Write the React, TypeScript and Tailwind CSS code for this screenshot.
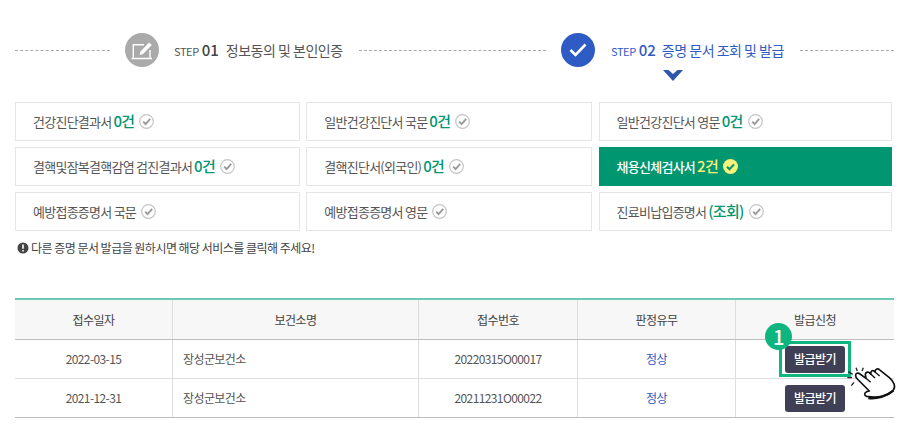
const fontStack = { fontFamily: '"Noto Sans CJK KR", "Noto Sans", sans-serif' }

function CheckIcon({ active }: { active?: boolean }) {
  if (active) {
    return (
      <svg width="15" height="15" viewBox="0 0 15 15" className="shrink-0">
        <circle cx="7.5" cy="7.5" r="7.5" fill="#f7f27a" />
        <path d="M4 7.8l2.5 2.5L11 5.4" fill="none" stroke="#00966f" strokeWidth="2" />
      </svg>
    )
  }
  return (
    <svg width="15" height="15" viewBox="0 0 15 15" className="shrink-0">
      <circle cx="7.5" cy="7.5" r="6.8" fill="#fff" stroke="#c4c4c4" strokeWidth="1.2" />
      <path d="M4.2 7.6l2.4 2.6L11.2 4.8" fill="none" stroke="#999999" strokeWidth="1.8" />
    </svg>
  )
}

function Dashed({ className }: { className: string }) {
  return <div className={`border-t border-dashed border-[#a8a8a8] ${className}`} />
}

function StepsBar() {
  return (
    <div className="flex items-center pl-[15px] pt-[33px] h-[67px]">
      <Dashed className="w-[95px]" />
      <div className="w-[34px] h-[34px] rounded-full bg-[#aaaaaa] ml-[15px] flex items-center justify-center">
        <svg width="24" height="22" viewBox="0 0 24 22">
          <path d="M3.3 18.5V5.7H14M20 11v7.5M1.5 19.5h20.5" fill="none" stroke="#fff" strokeWidth="1.4" />
          <path d="M9.5 16l1-3.6 8.6-9 2.7 2.6-8.7 9z" fill="#fff" />
        </svg>
      </div>
      <div className="ml-[15px] w-[185px] flex items-baseline text-[#555555] whitespace-nowrap">
        <span className="text-[11px] tracking-[-0.4px]">STEP</span>
        <span className="text-[15px] font-medium ml-[3px] text-[#444]">01</span>
        <span className="text-[14px] ml-[7px] tracking-[-0.5px]">정보동의 및 본인인증</span>
      </div>
      <Dashed className="w-[187px]" />
      <div className="relative w-[34px] h-[34px] rounded-full bg-[#2f5bc4] ml-[15px] flex items-center justify-center">
        <svg width="20" height="16" viewBox="0 0 20 16">
          <path d="M2.5 8l5 5L17.5 2.5" fill="none" stroke="#fff" strokeWidth="2.6" />
        </svg>
      </div>
      <div className="relative ml-[16px] w-[189px] flex items-baseline text-[#2f5bc4] whitespace-nowrap">
        <span className="text-[11px] tracking-[-0.4px]">STEP</span>
        <span className="text-[15px] font-medium ml-[3px]">02</span>
        <span className="text-[14px] ml-[6px] tracking-[-0.5px]">증명 문서 조회 및 발급</span>
        <svg width="20" height="11" viewBox="0 0 20 11" className="absolute left-[52px] top-[31px]">
          <path d="M0 0h5.5L10 4l4.5-4H20L10 11z" fill="#2f55ac" />
        </svg>
      </div>
      <Dashed className="w-[94px]" />
    </div>
  )
}

interface Service {
  name: string
  count: string
  active?: boolean
}

const services: Service[] = [
  { name: '건강진단결과서', count: '0건' },
  { name: '일반건강진단서 국문', count: '0건' },
  { name: '일반건강진단서 영문', count: '0건' },
  { name: '결핵및잠복결핵감염 검진결과서', count: '0건' },
  { name: '결핵진단서(외국인)', count: '0건' },
  { name: '채용신체검사서', count: '2건', active: true },
  { name: '예방접종증명서 국문', count: '' },
  { name: '예방접종증명서 영문', count: '' },
  { name: '진료비납입증명서', count: '(조회)' },
]

function ServiceGrid() {
  return (
    <div className="grid grid-cols-[285px_286px_293px] gap-x-[6.3px] gap-y-[6px] ml-[15px] mt-[35px]">
      {services.map((s) => (
        <div
          key={s.name}
          className={`h-[39px] flex items-center gap-[5px] pl-[17px] whitespace-nowrap border text-[13px] tracking-[-0.75px] ${
            s.active
              ? 'bg-[#00966f] border-[#00966f] text-white font-medium'
              : 'bg-white border-[#e6e6e6] text-[#555555]'
          }`}
        >
          <span>
            {s.name}
            {s.count && (
              <span
                className={`ml-[2px] text-[15px] font-medium ${s.active ? 'text-[#f7f27a]' : 'text-[#00966f]'}`}
              >
                {s.count}
              </span>
            )}
          </span>
          <CheckIcon active={s.active} />
        </div>
      ))}
    </div>
  )
}

const rows = [
  { date: '2022-03-15', center: '장성군보건소', no: '20220315O00017', result: '정상' },
  { date: '2021-12-31', center: '장성군보건소', no: '20211231O00022', result: '정상' },
]

function ResultTable() {
  const colClass = 'grid grid-cols-[158px_246px_159px_158px_158px]'
  return (
    <div className="relative ml-[15px] mt-[42px] w-[879px] border-t-2 border-[#6fc9b2] text-[12px] tracking-[-0.6px] text-[#555555]">
      <div className={`${colClass} h-[40px] bg-[#f7f7f7] border-b border-[#bdbdbd] text-[#444]`}>
        {['접수일자', '보건소명', '접수번호', '판정유무', '발급신청'].map((h, i) => (
          <div key={h} className={`flex items-center justify-center ${i < 4 ? 'border-r border-[#dddddd]' : ''}`}>
            {h}
          </div>
        ))}
      </div>
      {rows.map((r, i) => (
        <div
          key={r.no}
          className={`${colClass} h-[39px] border-b ${i === rows.length - 1 ? 'border-[#bdbdbd]' : 'border-[#dddddd]'}`}
        >
          <div className="flex items-center justify-center border-r border-[#dddddd]">{r.date}</div>
          <div className="flex items-center pl-[10px] border-r border-[#dddddd]">{r.center}</div>
          <div className="flex items-center justify-center border-r border-[#dddddd]">{r.no}</div>
          <div className="flex items-center justify-center border-r border-[#dddddd] text-[#2f5bc4]">{r.result}</div>
          <div className="flex items-center justify-center">
            <button className="w-[60px] h-[27px] rounded-[3px] bg-[#3f3f55] text-white text-[12px] font-medium">
              발급받기
            </button>
          </div>
        </div>
      ))}

      {/* highlight overlay */}
      <div className="absolute left-[764px] top-[41px] w-[72px] h-[36px] border-[3px] border-[#0fb57f]" />
      <div className="absolute left-[750px] top-[23px] w-[27px] h-[27px] rounded-full bg-[#0fb57f] text-white text-[20px] font-medium flex items-center justify-center leading-none">
        1
      </div>
      <svg width="60" height="50" viewBox="0 0 180 150" className="absolute left-[825px] top-[55px]">
        <path
          d="M48 38l4 10M70 38l-4 10M25 50l13 8M22 68h14M34 92l8-10"
          stroke="#222"
          strokeWidth="4"
          fill="none"
        />
        <path
          d="M47 62C46 55 54 52 60 57L78 70L76 58C76 52 84 50 88 53L92 57C92 47 98 45 102 48L105 51C106 41 114 40 118 44L148 68C162 80 168 95 160 105C150 118 125 128 100 126L80 124C72 122 72 114 80 110L88 108L52 72C49 69 47 66 47 62Z"
          fill="#fff"
          stroke="#111"
          strokeWidth="5"
          strokeLinejoin="round"
        />
        <path d="M78 70l14 12M88 53l17 16M105 51l14 12" stroke="#111" strokeWidth="4" fill="none" />
        <path d="M85 129c25 3 55-5 75-22" stroke="#111" strokeWidth="7" fill="none" />
      </svg>
    </div>
  )
}

export default function App() {
  return (
    <div className="w-[908px] h-[437px] bg-white overflow-hidden" style={fontStack}>
      <StepsBar />
      <ServiceGrid />
      <div className="ml-[17px] mt-[9px] h-[16px] flex items-center gap-[2px] text-[12px] tracking-[-0.52px] text-[#444]">
        <svg width="12" height="12" viewBox="0 0 12 12">
          <circle cx="6" cy="6" r="5.5" fill="#444" />
          <path d="M6 2.5v4.2M6 8v1.6" stroke="#fff" strokeWidth="1.6" />
        </svg>
        다른 증명 문서 발급을 원하시면 해당 서비스를 클릭해 주세요!
      </div>
      <ResultTable />
    </div>
  )
}
